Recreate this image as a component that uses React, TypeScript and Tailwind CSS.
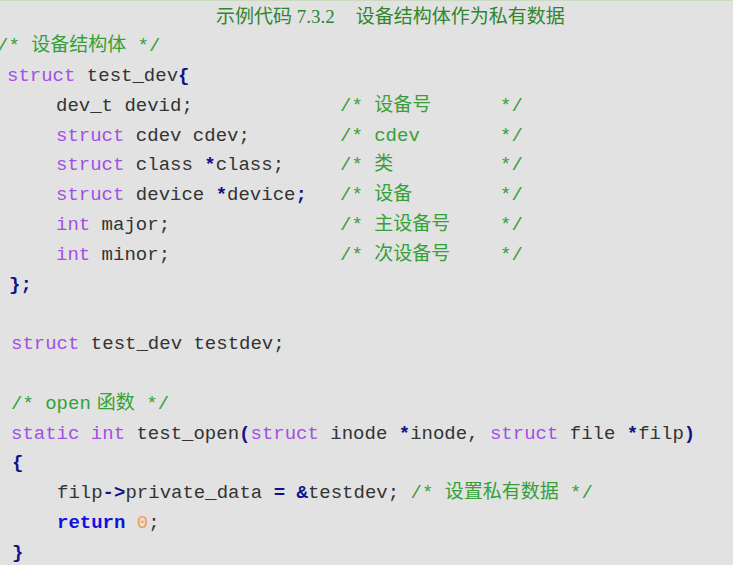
import type { ReactNode } from 'react';

// 關鍵字 / 標點 / 註釋 上色
function K({ children }: { children: ReactNode }) {
  return <span className="text-[#a24fe6]">{children}</span>;
}

function P({ children }: { children: ReactNode }) {
  return <span className="font-bold text-[#12128a]">{children}</span>;
}

function C({ children }: { children: ReactNode }) {
  return <span className="text-[#36a036]">{children}</span>;
}

function Line({ children, className = '' }: { children?: ReactNode; className?: string }) {
  return (
    <div className={`h-[29.8px] flex items-center whitespace-pre ${className}`}>
      <span>{children}</span>
    </div>
  );
}

// 結構體成員: 代碼 + 對齊的註釋
function Member({ code, note }: { code: ReactNode; note: string }) {
  return (
    <div className="h-[29.8px] flex items-center whitespace-pre pl-[56px]">
      <span className="w-[284px] shrink-0">{code}</span>
      <span className="w-[160px] shrink-0">
        <C>{'/* ' + note}</C>
      </span>
      <C>*/</C>
    </div>
  );
}

export default function App() {
  return (
    <div className="w-[733px] h-[565px] overflow-hidden bg-[#e2e2e2] border-t border-[#c9dcc2] text-[19px] text-[#333333] font-['Liberation_Mono','Noto_Sans_CJK_SC',monospace]">
      <div className="h-[30.5px] flex items-center pl-[216px] pt-[1px] text-[#2f862f] font-['Liberation_Serif','Noto_Sans_CJK_SC',serif] whitespace-pre">
        <span>示例代码 7.3.2</span>
        <span className="ml-[21px]">设备结构体作为私有数据</span>
      </div>

      <Line className="-ml-[3px]">
        <C>/* 设备结构体 */</C>
      </Line>
      <Line className="pl-[7px]">
        <K>struct</K> test_dev<P>{'{'}</P>
      </Line>
      <Member code={<>dev_t devid;</>} note="设备号" />
      <Member code={<><K>struct</K> cdev cdev;</>} note="cdev" />
      <Member code={<><K>struct</K> class <P>*</P>class;</>} note="类" />
      <Member code={<><K>struct</K> device <P>*</P>device<P>;</P></>} note="设备" />
      <Member code={<><K>int</K> major;</>} note="主设备号" />
      <Member code={<><K>int</K> minor;</>} note="次设备号" />
      <Line className="pl-[9px]">
        <P>{'};'}</P>
      </Line>
      <Line />
      <Line className="pl-[11px]">
        <K>struct</K> test_dev testdev;
      </Line>
      <Line />
      <Line className="pl-[11px]">
        <C>
          /* open<span className="ml-[6px]">函数</span> */
        </C>
      </Line>
      <Line className="pl-[11px]">
        <K>static</K> <K>int</K> test_open<P>(</P><K>struct</K> inode <P>*</P>inode, <K>struct</K> file <P>*</P>filp<P>)</P>
      </Line>
      <Line className="pl-[12px]">
        <P>{'{'}</P>
      </Line>
      <Line className="pl-[57px]">
        filp<P>{'->'}</P>private_data <P>=</P> <P>&amp;</P>testdev; <C>/* 设置私有数据 */</C>
      </Line>
      <Line className="pl-[57px]">
        <span className="font-bold text-[#1010e0]">return</span> <span className="text-[#f0a050]">0</span>;
      </Line>
      <Line className="pl-[12px]">
        <P>{'}'}</P>
      </Line>
    </div>
  );
}
